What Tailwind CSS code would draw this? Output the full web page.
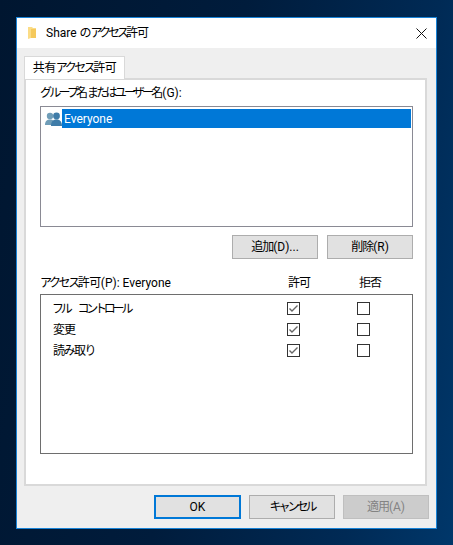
<!DOCTYPE html>
<html lang="ja">
<head>
<meta charset="utf-8">
<script src="https://cdn.jsdelivr.net/npm/@tailwindcss/browser@4"></script>
</head>
<body class="w-[453px] h-[545px] overflow-hidden bg-[linear-gradient(100deg,#001630_0%,#001c3c_45%,#002a55_80%,#00376a_100%)] font-['Roboto','Noto_Sans_CJK_JP',sans-serif] text-[12px] leading-[16px] text-[#000]">
<div class="pt-[17px] pl-[16px]">
  <div class="w-[421px] h-[512px] border border-[#1883d7] bg-[#efefef] flex flex-col">
    <div class="h-[30px] bg-white flex items-center pl-[11px] pr-[9px] shrink-0">
      <svg class="w-[10px] h-[14px] mr-[8px]" viewBox="0 0 10 14"><path d="M0 1h4l1 1h3v10H3l-3 1z" fill="#fbdc86"/><path d="M3 3h5v9H3z" fill="#f5c95c"/></svg>
      <span>Share <span class="tracking-[-1px]">の</span><span class="tracking-[-3px]">アクセス</span><span class="tracking-[-1px]">許可</span></span>
      <svg class="w-[11px] h-[11px] ml-auto" viewBox="0 0 11 11"><path d="M.5.5l10 10M10.5.5l-10 10" stroke="#111" stroke-width="1" fill="none"/></svg>
    </div>
    <div class="pl-[7px] pt-[8px] flex flex-col">
      <div class="w-[101px] h-[23px] -mb-px relative z-10 bg-white border border-b-0 border-[#d9d9d9] flex items-center justify-center"><span><span class="tracking-[-0.500px]">共有</span><span class="tracking-[-2.500px]">アクセス</span><span class="tracking-[-0.500px]">許可</span></span></div>
      <div class="w-[403px] h-[408px] bg-white border-2 border-[#d9d9d9] pt-[3px] pl-[14px] pr-[12px] flex flex-col">
        <div class="h-[16px] mt-[2px] mb-[5px] -mx-px pl-[1px]"><span class="tracking-[-2.800px]">グループ</span><span class="tracking-[-1px]">名</span><span class="tracking-[-2.800px]">またはユーザー</span><span class="tracking-[-1px]">名</span>(G):</div>
        <div class="w-[373px] h-[121px] border border-[#8a8a94] pt-[1px] pl-[4px] pr-[1px] shrink-0">
          <div class="flex items-center h-[19px] mt-[1px]">
            <svg class="w-[17px] h-[14px] shrink-0" viewBox="0 0 17 14"><circle cx="5" cy="4" r="3.200" fill="#6f9db8"/><path d="M0 13c0-4 2-5.500 5-5.500s5 1.500 5 5.500z" fill="#6f9db8"/><circle cx="11.500" cy="4" r="3.400" fill="#3f7ca8"/><path d="M6 14c0-5 2.500-6.500 5.500-6.500s5.500 1.500 5.500 6.500z" fill="#3f7ca8"/></svg>
            <div class="flex-1 h-[19px] bg-[#0078d7] text-white flex items-center pl-[2px]">Everyone</div>
          </div>
        </div>
        <div class="flex justify-end gap-[9px] mt-[8px] shrink-0">
          <button class="w-[86px] h-[24px] bg-[#e1e1e1] border border-[#adadad]"><span class="tracking-[-1px]">追加</span>(D)...</button>
          <button class="w-[86px] h-[24px] bg-[#e1e1e1] border border-[#adadad]"><span class="tracking-[-1px]">削除</span>(R)</button>
        </div>
        <div class="flex h-[16px] mt-[16px] mb-[3px] shrink-0">
          <span class="w-[248px]"><span class="tracking-[-2.400px]">アクセス</span><span class="tracking-[-0.500px]">許可</span>(P): Everyone</span>
          <span class="w-[71px] tracking-[-1px]">許可</span>
          <span class="tracking-[-1px]">拒否</span>
        </div>
        <div class="w-[373px] h-[160px] border border-[#6e6e6e] pt-[7px] pl-[12px] shrink-0 flex flex-col gap-[5px]">
          <div class="flex items-start h-[16px]">
            <span class="w-[234px] -mt-[1px] -ml-[1px] mr-[1px] tracking-[-3.200px] [word-spacing:8px]">フル コントロール</span>
            <span class="w-[13px] h-[13px] border border-[#333] flex items-center justify-center"><svg class="w-[11px] h-[11px]" viewBox="0 0 11 11"><path d="M1.500 5.500l2.500 2.500 5.500-5.500" stroke="#666" stroke-width="1.400" fill="none"/></svg></span>
            <span class="w-[13px] h-[13px] border border-[#333] ml-[57px]"></span>
          </div>
          <div class="flex items-start h-[16px]">
            <span class="w-[234px] -mt-[1px] tracking-[-1px]">変更</span>
            <span class="w-[13px] h-[13px] border border-[#333] flex items-center justify-center"><svg class="w-[11px] h-[11px]" viewBox="0 0 11 11"><path d="M1.500 5.500l2.500 2.500 5.500-5.500" stroke="#666" stroke-width="1.400" fill="none"/></svg></span>
            <span class="w-[13px] h-[13px] border border-[#333] ml-[57px]"></span>
          </div>
          <div class="flex items-start h-[16px]">
            <span class="w-[234px] -mt-[1px] tracking-[-1.500px]">読み取り</span>
            <span class="w-[13px] h-[13px] border border-[#333] flex items-center justify-center"><svg class="w-[11px] h-[11px]" viewBox="0 0 11 11"><path d="M1.500 5.500l2.500 2.500 5.500-5.500" stroke="#666" stroke-width="1.400" fill="none"/></svg></span>
            <span class="w-[13px] h-[13px] border border-[#333] ml-[57px]"></span>
          </div>
        </div>
      </div>
    </div>
    <div class="flex justify-end gap-[8px] pr-[7px] mt-[9px]">
      <button class="w-[87px] h-[24px] bg-[#e1e1e1] border-2 border-[#0078d7]">OK</button>
      <button class="w-[86px] h-[24px] bg-[#e1e1e1] border border-[#adadad]"><span class="tracking-[-3px]">キャンセル</span></button>
      <button class="w-[86px] h-[24px] bg-[#cccccc] border border-[#bfbfbf] text-[#838383]"><span class="tracking-[-1px]">適用</span>(A)</button>
    </div>
  </div>
</div>
</body>
</html>
